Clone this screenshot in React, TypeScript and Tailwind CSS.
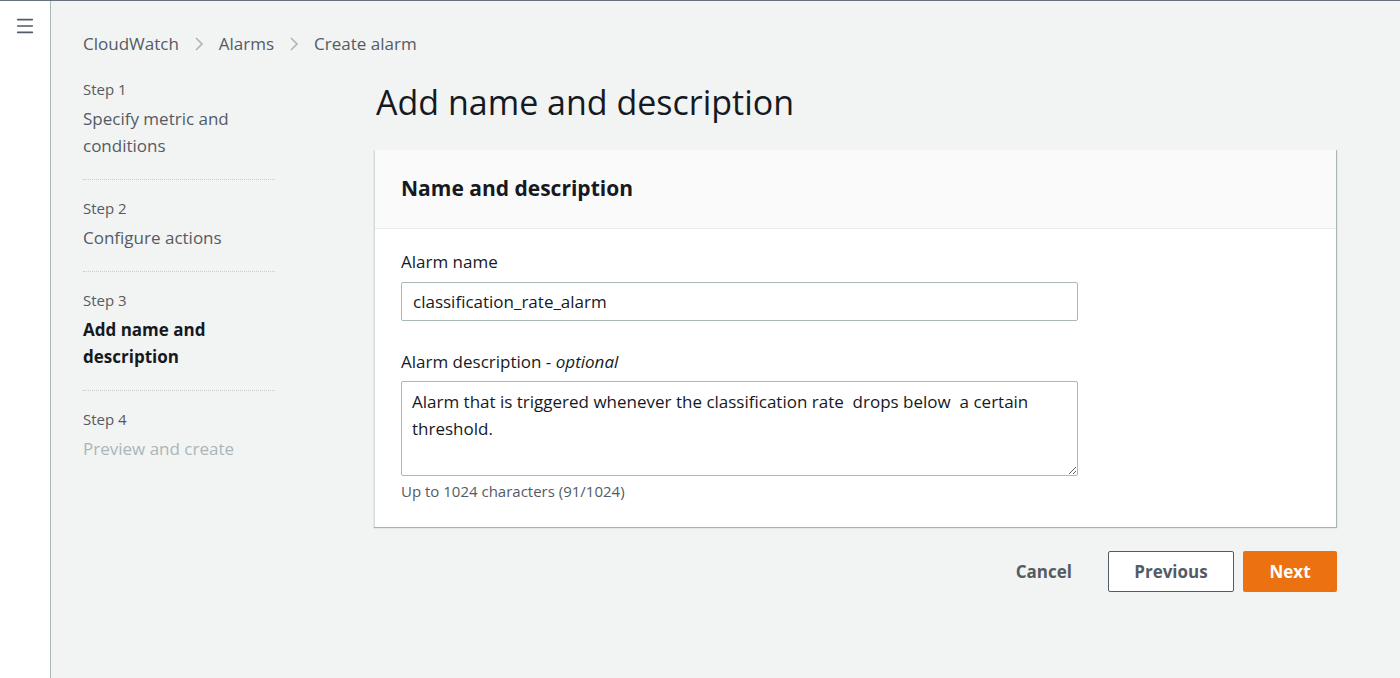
import { Menu } from 'lucide-react';

const steps = [
  { label: 'Step 1', title: 'Specify metric and conditions', state: 'done' },
  { label: 'Step 2', title: 'Configure actions', state: 'done' },
  { label: 'Step 3', title: 'Add name and description', state: 'active' },
  { label: 'Step 4', title: 'Preview and create', state: 'disabled' },
];

function Chevron() {
  return (
    <svg width="10" height="16" viewBox="0 0 10 16" className="mx-[15px]">
      <path d="M2 2 L8 8 L2 14" fill="none" stroke="#aab7b8" strokeWidth="1.6" />
    </svg>
  );
}

export default function App() {
  return (
    <div
      className="w-[1400px] h-[678px] flex bg-[#f2f3f3] border-t border-[#687078] text-[#16191f] overflow-hidden"
      style={{ fontFamily: '"Open Sans", "Noto Sans", sans-serif' }}
    >
      {/* Side nav toggle */}
      <div className="w-[51px] shrink-0 bg-white border-r border-[#aab7b8] flex justify-center pt-[14px]">
        <Menu className="w-[22px] h-[22px] text-[#545b64]" strokeWidth={1.75} />
      </div>

      <div className="flex-1 pl-[32px] pr-[63px] pt-[29px]">
        {/* Breadcrumbs */}
        <div className="flex items-center text-[17px] text-[#545b64] h-[28px]">
          <span>CloudWatch</span>
          <Chevron />
          <span>Alarms</span>
          <Chevron />
          <span>Create alarm</span>
        </div>

        <div className="flex mt-[17px]">
          {/* Wizard steps */}
          <div className="w-[192px] shrink-0">
            {steps.map((step, i) => (
              <div key={i} className={i < steps.length - 1 ? 'border-b border-dotted border-[#c7ccd0] pb-[20px] mb-[14px]' : ''}>
                <div className="text-[15px] leading-[28px] text-[#545b64]">{step.label}</div>
                <div
                  className={
                    'text-[17px] leading-[27px] mt-[2px] ' +
                    (step.state === 'active'
                      ? 'font-bold text-[#16191f]'
                      : step.state === 'disabled'
                      ? 'text-[#aab7b8]'
                      : 'text-[#545b64]')
                  }
                >
                  {step.title}
                </div>
              </div>
            ))}
          </div>

          {/* Main content */}
          <div className="flex-1 ml-[99px]">
            <h1 className="text-[34px] leading-[40px] mt-[7px] mb-[28px] pl-[2px]">Add name and description</h1>

            <div className="bg-white border-l border-[#d5dbdb] border-r border-r-[#aab7b8] shadow-[0_1px_1px_0_rgba(0,28,36,0.3)]">
              <div className="bg-[#fafafa] border-b border-[#eaeded] h-[79px] px-[26px] flex items-center">
                <h2 className="text-[21px] font-bold">Name and description</h2>
              </div>

              <div className="px-[26px] pt-[21px] pb-[26px]">
                <div className="text-[17px] leading-[24px] mb-[8px]">Alarm name</div>
                <input
                  defaultValue="classification_rate_alarm"
                  className="w-[677px] h-[39px] border border-[#aab7b8] rounded-[2px] px-[11px] text-[17px] outline-none"
                  style={{ fontFamily: '"Open Sans", sans-serif' }}
                />

                <div className="text-[17px] leading-[24px] mt-[29px] mb-[7px]">
                  Alarm description - <i>optional</i>
                </div>
                <textarea
                  defaultValue="Alarm that is triggered whenever the classification rate  drops below  a certain threshold."
                  className="block w-[677px] h-[95px] border border-[#aab7b8] rounded-[2px] px-[10px] py-[6px] text-[17px] leading-[27px] outline-none resize-y"
                  style={{ fontFamily: '"Open Sans", sans-serif' }}
                />
                <div className="text-[15px] leading-[20px] mt-[5px] text-[#545b64]">Up to 1024 characters (91/1024)</div>
              </div>
            </div>

            {/* Actions */}
            <div className="flex justify-end items-center mt-[24px]">
              <button className="text-[17px] font-bold text-[#545b64] px-[20px] h-[41px] mr-[16px]">Cancel</button>
              <button className="text-[17px] font-bold text-[#545b64] bg-white border border-[#545b64] rounded-[2px] w-[126px] h-[41px] mr-[9px]">
                Previous
              </button>
              <button className="text-[17px] font-bold text-white bg-[#ec7211] rounded-[2px] w-[94px] h-[41px]">Next</button>
            </div>
          </div>
        </div>
      </div>
    </div>
  );
}
